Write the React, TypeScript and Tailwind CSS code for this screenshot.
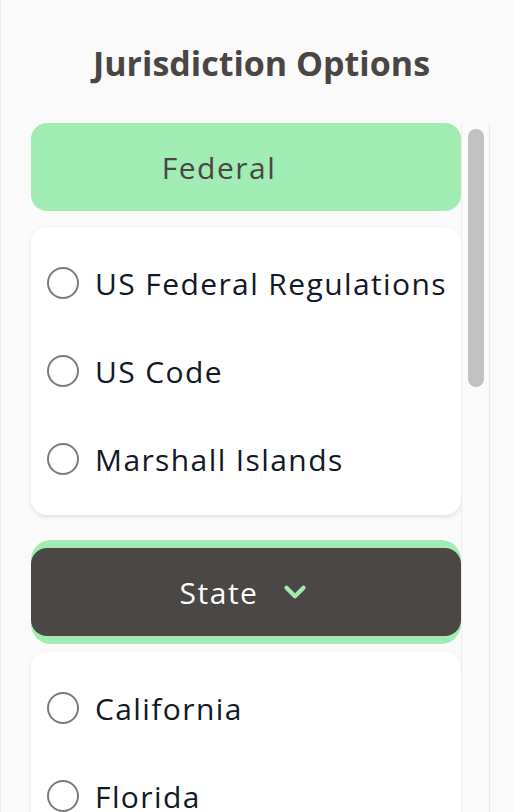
import { ChevronDown } from 'lucide-react';

const federal = ['US Federal Regulations', 'US Code', 'Marshall Islands'];
const states = ['California', 'Florida'];

const Radio: React.FC<{ label: string }> = ({ label }) => (
  <label className="flex h-[88px] shrink-0 items-center gap-4 px-4">
    <span className="h-8 w-8 shrink-0 rounded-full border-2 border-[#7a7a7a] bg-white" />
    <span className="whitespace-nowrap text-[30px] tracking-[1.4px] text-[#111827]">{label}</span>
  </label>
);

const GroupHeader: React.FC<{ title: string; active?: boolean }> = ({ title, active }) => (
  <div
    className={
      active
        ? 'flex h-[88px] items-center justify-center gap-[20px] rounded-2xl bg-[#4a4744] text-[30px] tracking-[1.5px] text-white'
        : 'flex h-[88px] shrink-0 items-center justify-center gap-[20px] rounded-2xl bg-[#a1ecb2] text-[30px] tracking-[1.5px] text-[#4a4643]'
    }
  >
    <span>{title}</span>
    <ChevronDown size={34} strokeWidth={3} className={active ? 'text-[#a1ecb2]' : 'invisible'} />
  </div>
);

export default function App() {
  return (
    <div className="flex h-[812px] w-[514px] flex-col overflow-hidden border-l border-[#eeeeee] bg-[#fafafa] font-['Open_Sans',sans-serif]">
      <h1 className="shrink-0 pt-[43px] pb-[40px] pl-2 text-center text-[34px] font-bold leading-[40px] text-[#4a4643]">
        Jurisdiction Options
      </h1>

      <div className="flex min-h-0 flex-1 pl-[30px]">
        {/* content column */}
        <div className="flex w-[430px] shrink-0 flex-col">
          <GroupHeader title="Federal" />
          <div className="mt-4 shrink-0 rounded-2xl bg-white py-3 shadow-[0_2px_4px_rgba(0,0,0,0.1)]">
            {federal.map((f) => (
              <Radio key={f} label={f} />
            ))}
          </div>

          <div className="mt-[25px] shrink-0 rounded-[20px] bg-[#a1ecb2] py-2">
            <GroupHeader title="State" active />
          </div>
          <div className="mt-2 shrink-0 rounded-2xl bg-white py-3 shadow-[0_2px_4px_rgba(0,0,0,0.1)]">
            {states.map((s) => (
              <Radio key={s} label={s} />
            ))}
          </div>
        </div>

        {/* scrollbar */}
        <div className="flex w-[29px] shrink-0 justify-center border-x border-[#ececec] bg-[#fafafa] pt-[6px]">
          <div className="h-[258px] w-4 rounded-full bg-[#c1c1c1]" />
        </div>
      </div>
    </div>
  );
}
